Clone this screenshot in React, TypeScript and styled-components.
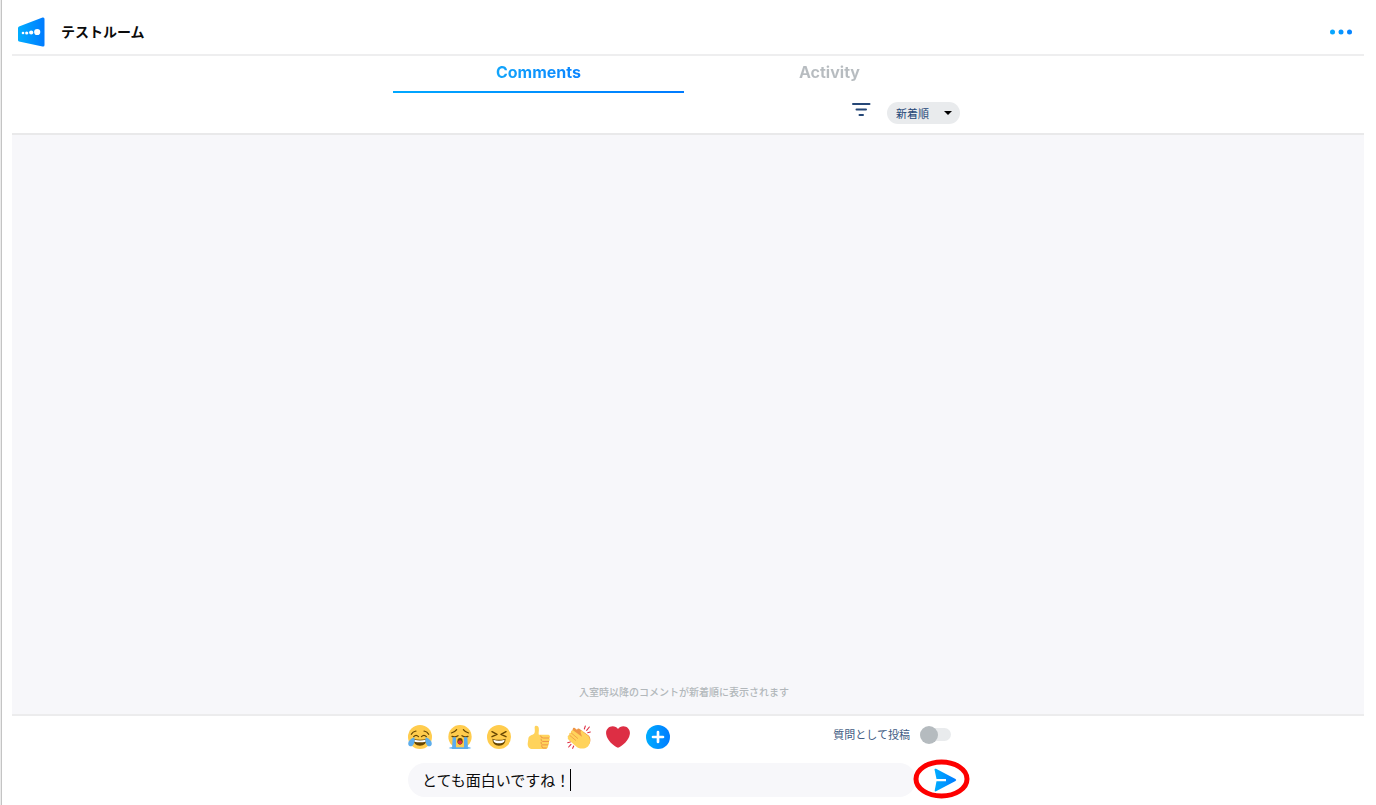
import React, { useState } from "react";
import styled, { createGlobalStyle } from "styled-components";

const GlobalStyle = createGlobalStyle`
  *, *::before, *::after { box-sizing: border-box; }
  body {
    margin: 0;
    background: #fff;
    color: #0b0b0b;
    font-family: Inter, "Noto Sans CJK JP", sans-serif;
  }
  button, input, select { font-family: inherit; margin: 0; }
`;

const Page = styled.div`
  min-height: 100vh;
  display: flex;
  flex-direction: column;
  padding: 0 12px 0 11px;
  border-left: 1px solid #ebebeb;
  box-shadow: inset 1px 0 #c4c4c4;
`;

const Header = styled.header`
  display: flex;
  align-items: center;
  height: 56px;
  padding: 10px 11px 0 5px;
  border-bottom: 2px solid #eeeeef;
`;

const RoomName = styled.h1`
  flex: 1;
  margin: 0 0 0 15px;
  font-size: 14px;
  line-height: 20px;
  font-weight: 700;
`;

const IconButton = styled.button`
  display: flex;
  padding: 0;
  border: 0;
  background: none;
  cursor: pointer;
`;

const TopPanel = styled.div`
  height: 79px;
  padding-right: 8px;
  border-bottom: 2px solid #e9e9ea;
`;

const Column = styled.div`
  width: 100%;
  max-width: 582px;
  margin: 0 auto;
`;

const Tabs = styled.div`
  display: flex;
`;

const Tab = styled.button<{ $active?: boolean }>`
  flex: 1;
  height: 37px;
  padding: 0 0 3px;
  border: 0;
  border-bottom: 2px solid transparent;
  border-image: ${(p) => (p.$active ? "linear-gradient(90deg, #00a8ff, #007bff) 1" : "none")};
  background: none;
  font-size: 16px;
  line-height: 20px;
  font-weight: 700;
  cursor: pointer;
`;

const TabText = styled.span<{ $active?: boolean }>`
  color: transparent;
  background: ${(p) => (p.$active ? "linear-gradient(90deg, #12a5fb, #0a84ff)" : "#b7bcc0")};
  background-clip: text;
`;

const Filters = styled.div`
  display: flex;
  justify-content: flex-end;
  align-items: flex-start;
  gap: 16px;
  padding: 9px 15px 0 0;
`;

const SortBox = styled.label`
  display: grid;
  align-items: center;
  width: 73px;
  height: 22px;
  border-radius: 11px;
  background: #e9ebed;

  & > * { grid-area: 1 / 1; }
  & > svg { justify-self: end; margin-right: 8px; pointer-events: none; }
`;

const SortSelect = styled.select`
  width: 100%;
  height: 22px;
  padding: 1px 0 0 9px;
  border: 0;
  appearance: none;
  background: none;
  color: #254777;
  font-size: 11px;
`;

const Comments = styled.main`
  flex: 1;
  display: flex;
  flex-direction: column;
  justify-content: flex-end;
  align-items: center;
  padding: 0 8px 14px 0;
  background: #f7f7fa;
`;

const Note = styled.p`
  margin: 0;
  color: #b2b7bb;
  font-size: 10px;
  line-height: 16px;
  font-weight: 500;
`;

const Footer = styled.footer`
  padding: 9px 8px 8px 0;
  border-top: 2px solid #ececed;
`;

const Composer = styled(Column)`
  padding-left: 15px;
`;

const ReactionRow = styled.div`
  display: flex;
  justify-content: space-between;
  align-items: center;
  height: 24px;
  margin-bottom: 14px;
  padding-right: 24px;
`;

const Reactions = styled.div`
  display: flex;
  justify-content: space-between;
  width: 262px;
`;

const QuestionToggle = styled.label`
  display: flex;
  align-items: center;
  gap: 10px;
  padding-bottom: 5px;
  color: #405a82;
  font-size: 11px;
  line-height: 16px;
`;

const Switch = styled.input`
  appearance: none;
  display: flex;
  align-items: center;
  width: 31px;
  height: 13px;
  margin: 0;
  border-radius: 7px;
  background: #e9ebed;

  &::before {
    content: "";
    width: 18px;
    height: 18px;
    border-radius: 50%;
    background: #b5bbbf;
  }
  &:checked { justify-content: flex-end; background: #b5dcff; }
  &:checked::before { background: #0a8cff; }
`;

const MessageRow = styled.form`
  display: flex;
  align-items: center;
`;

const MessageBox = styled.label`
  flex: 1;
  display: flex;
  align-items: center;
  height: 34px;
  padding: 0 14px;
  border-radius: 17px;
  background: #f7f7fa;
`;

const MessageInput = styled.input`
  field-sizing: content;
  max-width: 100%;
  padding: 1px 0 0;
  border: 0;
  outline: 0;
  background: none;
  color: #0b0b0b;
  font-size: 15px;
  line-height: 22px;
`;

const Caret = styled.span`
  width: 1px;
  height: 22px;
  background: #000;
`;

const SendButton = styled(IconButton)`
  position: relative;
  width: 59px;
  height: 34px;
  padding-right: 2px;
  align-items: center;
  justify-content: center;
`;

const Ring = styled.svg`
  position: absolute;
  left: -3px;
  top: -4px;
  pointer-events: none;
`;

const Emoji = ({ label, children }: { label: string; children: React.ReactNode }) => (
  <IconButton type="button" aria-label={label}>
    <svg width="24" height="24" viewBox="0 0 36 36">{children}</svg>
  </IconButton>
);

const Joy = () => (
  <>
    <circle cx="18" cy="18" r="18" fill="#FFCC4D" />
    <g fill="none" stroke="#664500" strokeWidth="1.800" strokeLinecap="round">
      <path d="M5 14Q7 10 12 9M31 14Q29 10 24 9" />
      <path d="M8.500 17.500Q12 13.500 15.800 17.500M20.200 17.500Q24 13.500 27.500 17.500" />
    </g>
    <path d="M8 21Q18 23 28 21Q27.500 31 18 31T8 21Z" fill="#664500" />
    <path d="M9.500 22.300Q18 24 26.500 22.300V25Q18 27 9.500 25Z" fill="#fff" />
    <path d="M1.500 31C-1.500 28 1 21.500 9.500 18.500C11 25 8 35 1.500 31ZM34.500 31C37.500 28 35 21.500 26.500 18.500C25 25 28 35 34.500 31Z" fill="#5DADEC" />
  </>
);

const Sob = () => (
  <>
    <circle cx="18" cy="17.500" r="17.500" fill="#FFCC4D" />
    <g fill="none" stroke="#664500" strokeWidth="1.800" strokeLinecap="round">
      <path d="M5 12Q10 11 13 7M31 12Q26 11 23 7" />
      <path d="M6 17Q10.500 19 15 16M30 17Q25.500 19 21 16" />
    </g>
    <path d="M7 18.500H12V36H6ZM24 18.500H29L30 36H24Z" fill="#5DADEC" />
    <path d="M1 34.500Q6 32 12 33.500H24Q30 32 35 34.500Q32 36 18 36T1 34.500Z" fill="#5DADEC" />
    <ellipse cx="18" cy="24.500" rx="4" ry="5" fill="#664500" />
    <ellipse cx="18" cy="26" rx="3.200" ry="3" fill="#DD2E44" />
  </>
);

const Laughing = () => (
  <>
    <circle cx="18" cy="18" r="18" fill="#FFCC4D" />
    <path d="M8 20.500Q18 24 28 20.500Q27.500 31 18 31T8 20.500Z" fill="#664500" />
    <path d="M9.500 22Q18 25 26.500 22Q26.500 25.500 23.500 26.500Q18 28 12.500 26.500Q9.500 25.500 9.500 22Z" fill="#fff" />
    <path
      d="M7.500 10L15 14L7.500 17.500M28.500 10L21 14L28.500 17.500"
      fill="none" stroke="#664500" strokeWidth="2.200" strokeLinecap="round" strokeLinejoin="round"
    />
  </>
);

const ThumbsUp = () => (
  <>
    <path
      d="M2 21C2 17 6 15.500 9.500 14C13 12 11.300 6 11.500 3C12 .5 17 .2 17.700 5C18.300 9 17 12 17.700 14.500H31C35 14.500 35.500 18.500 33 19.500C35 21 34.500 24 32.500 24.700C34 26.500 33 29.300 31.500 29.800C32.300 32.500 31 36 28 36H8C4 36 1 33 1 28Z"
      fill="#FFD35B"
    />
    <path
      d="M33 19.500H24.500Q20.500 19.500 20.500 16.500M32.500 24.700H23.500Q20.500 24 21 21M31.500 29.800H23.500Q20.500 29 21 26M22 31Q22 34.500 24 34.500H29"
      fill="none" stroke="#EE9547" strokeWidth="1.500" strokeLinecap="round"
    />
  </>
);

const Clap = () => (
  <>
    <path
      d="M9 5C10.500 3.500 12 4.500 13 5.500L15 7C16 4.500 18.500 5 19.500 6.500L33 16C36 20 36 26 32 30C27 35 21 35 17 31L4 22Z"
      fill="#EF9645"
    />
    <path
      d="M1.500 19C0 17 2 14.500 4 15.500C2 13.500 4 10.500 6.500 12C4.500 9.500 7.500 6.500 10 8.500L22.500 17.500L20.500 11.500C20 8 23.500 8 24.500 11L32 16.500C36 22 35 29 31 32.500C26 36.500 18 36.500 13 31.500L3 23C1 21 .8 20 1.500 19Z"
      fill="#FFD35B"
    />
    <path d="M4 15.500L13 23M6.500 12L16 20" stroke="#EF9645" strokeWidth="1.200" strokeLinecap="round" />
    <path
      d="M26 6L27.500 1.500M29.500 8L33.500 3M31 11.500L35 10.500M1 26.500L5 25.500M2.500 33L6 29M8.500 35L10 31.500"
      stroke="#DD2E44" strokeWidth="1.600" strokeLinecap="round"
    />
  </>
);

const Heart = () => (
  <path
    d="M35.885 11.833c0-5.45-4.418-9.868-9.867-9.868-3.308 0-6.227 1.633-8.018 4.129-1.791-2.496-4.71-4.129-8.017-4.129-5.45 0-9.868 4.417-9.868 9.868 0 .772.098 1.52.266 2.241C1.751 22.587 11.216 31.568 18 34.034c6.783-2.466 16.249-11.447 17.617-19.959.17-.721.268-1.469.268-2.242z"
    fill="#DD2E44"
  />
);

const Plus = () => (
  <>
    <circle cx="18" cy="18" r="18" fill="url(#brand)" />
    <path d="M18 10.500V25.500M10.500 18H25.500" stroke="#fff" strokeWidth="4" strokeLinecap="round" />
  </>
);

export default function App() {
  const [message, setMessage] = useState("とても面白いですね！");
  return (
    <Page>
      <GlobalStyle />
      <Header>
        <svg width="29" height="30" viewBox="0 0 29 30" aria-hidden="true">
          <defs>
            <linearGradient id="brand" x1="0" x2="1" y1="0" y2="0">
              <stop offset="0" stopColor="#00adff" />
              <stop offset="1" stopColor="#007bff" />
            </linearGradient>
          </defs>
          <path d="M2 9.500L25.500 .5Q27.500 0 27.500 2V28Q27.500 30 25.500 29.500L2 24.500Q1 24.200 1 23V11Q1 10 2 9.500Z" fill="url(#brand)" />
          <g fill="#fff">
            <circle cx="6" cy="16" r="1.300" />
            <circle cx="9.700" cy="16" r="1.600" />
            <circle cx="14.200" cy="15.500" r="2.100" />
            <circle cx="20.200" cy="15" r="3.100" />
          </g>
        </svg>
        <RoomName>テストルーム</RoomName>
        <IconButton type="button" aria-label="メニュー">
          <svg width="24" height="6" viewBox="0 0 24 6">
            <circle cx="3.500" cy="3" r="2.500" fill="#08a6ff" />
            <circle cx="12" cy="3" r="2.500" fill="#0796ff" />
            <circle cx="20.500" cy="3" r="2.500" fill="#0785ff" />
          </svg>
        </IconButton>
      </Header>

      <TopPanel>
        <Column>
          <Tabs role="tablist">
            <Tab type="button" role="tab" aria-selected="true" $active>
              <TabText $active>Comments</TabText>
            </Tab>
            <Tab type="button" role="tab" aria-selected="false">
              <TabText>Activity</TabText>
            </Tab>
          </Tabs>
          <Filters>
            <IconButton type="button" aria-label="絞り込み">
              <svg width="20" height="16" viewBox="0 0 20 16" stroke="#254777" strokeWidth="2" strokeLinecap="round">
                <path d="M2 2H18.500M5.500 7.500H15M8.500 13H12" />
              </svg>
            </IconButton>
            <SortBox>
              <SortSelect aria-label="並び順" defaultValue="new">
                <option value="new">新着順</option>
              </SortSelect>
              <svg width="8" height="4" viewBox="0 0 8 4" aria-hidden="true">
                <path d="M0 0H8L4 4Z" fill="#000" />
              </svg>
            </SortBox>
          </Filters>
        </Column>
      </TopPanel>

      <Comments>
        <Note>入室時以降のコメントが新着順に表示されます</Note>
      </Comments>

      <Footer>
        <Composer>
          <ReactionRow>
            <Reactions>
              <Emoji label="うれし泣き"><Joy /></Emoji>
              <Emoji label="号泣"><Sob /></Emoji>
              <Emoji label="大笑い"><Laughing /></Emoji>
              <Emoji label="いいね"><ThumbsUp /></Emoji>
              <Emoji label="拍手"><Clap /></Emoji>
              <Emoji label="ハート"><Heart /></Emoji>
              <Emoji label="追加"><Plus /></Emoji>
            </Reactions>
            <QuestionToggle>
              質問として投稿
              <Switch type="checkbox" role="switch" />
            </QuestionToggle>
          </ReactionRow>
          <MessageRow onSubmit={(e) => e.preventDefault()}>
            <MessageBox>
              <MessageInput
                aria-label="コメント"
                value={message}
                onChange={(e) => setMessage(e.target.value)}
              />
              <Caret />
            </MessageBox>
            <SendButton type="submit" aria-label="送信">
              <svg width="24" height="24" viewBox="0 0 24 24">
                <path d="M1.500 1.500Q1.500 .3 3 .8L22.500 11Q24 12 22.500 13L3 23.300Q1.500 23.700 1.700 22.500L3.500 13.300H13V10.900H3.500Z" fill="url(#brand)" />
              </svg>
              <Ring width="58" height="40" viewBox="0 0 58 40" aria-hidden="true">
                <ellipse cx="28.500" cy="20" rx="25.500" ry="17" fill="none" stroke="#fd0000" strokeWidth="5" />
              </Ring>
            </SendButton>
          </MessageRow>
        </Composer>
      </Footer>
    </Page>
  );
}
